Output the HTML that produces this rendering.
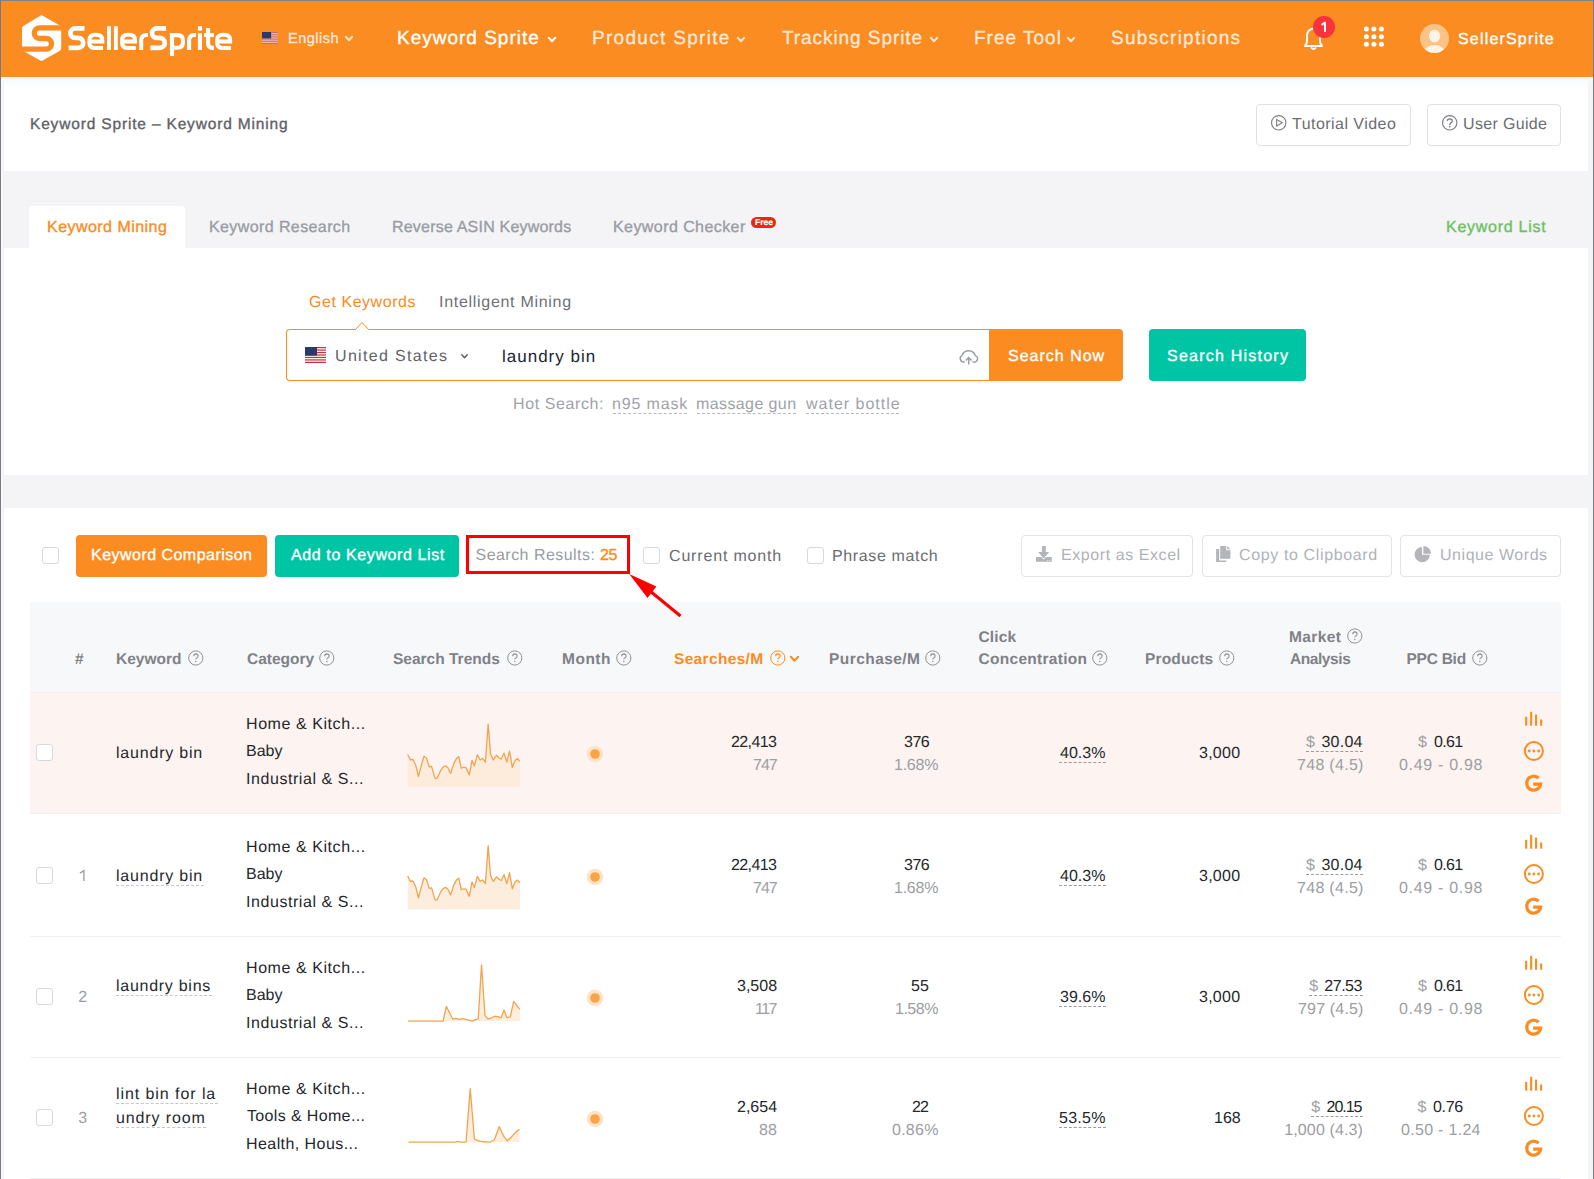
<!DOCTYPE html><html><head><meta charset="utf-8"><style>
html,body{margin:0;padding:0;width:1594px;height:1179px;overflow:hidden;position:relative;font-family:"Liberation Sans",sans-serif}
.t{position:absolute;white-space:pre;font-family:"Liberation Sans",sans-serif;text-rendering:geometricPrecision}
</style></head><body>
<div style="position:absolute;left:0px;top:0px;width:1594px;height:1179px;background:#f4f4f7;"></div>
<div style="position:absolute;left:4px;top:77px;width:1584px;height:1102px;background:#ffffff;"></div>
<div style="position:absolute;left:1px;top:77px;width:1px;height:1102px;background:#fcfcfe;"></div>
<div style="position:absolute;left:1px;top:1px;width:1592px;height:76px;background:#fa8c22;"></div>
<div style="position:absolute;left:0px;top:0px;width:1594px;height:1px;background:#78838e;"></div>
<div style="position:absolute;left:0px;top:0px;width:1px;height:1179px;background:#757b82;"></div>
<div style="position:absolute;left:1593px;top:0px;width:1px;height:1179px;background:#757b82;"></div>
<svg style="position:absolute;left:0;top:0" width="300" height="77" viewBox="0 0 300 77">
<path d="M41.4 15.1 L59.9 25.6 Q61.2 26.4 61.2 28 L61.2 48.2 Q61.2 50 59.6 51 L42.6 60.4 Q41.4 61 40.2 60.4 L23.4 51 Q22 50.2 22 48.6 L22 28.4 Q22 26.8 23.4 26 Z" fill="#fff"/>
<path d="M64 27.9 H39.6 A5.3 5.3 0 0 0 39.6 38.5 H46.2 A5.3 5.3 0 0 1 46.2 49.1 H19" fill="none" stroke="#fa8c22" stroke-width="5.3"/>
</svg>
<svg style="position:absolute;left:0;top:0" width="260" height="77"><path transform="translate(0 0)" d="M84.5 28.45 H75.1 A4.7 4.7 0 0 0 75.1 37.85 H78.2 A5.02 5.02 0 0 1 78.2 47.9 H68.7" fill="none" stroke="#fff" stroke-width="4.7"/><path transform="translate(0 0)" d="M103.1 47.95 H94.6 Q89.35 47.95 89.35 42.6 V40.3 Q89.35 34.75 95 34.75 H96.8 Q102.35 34.75 102.35 40.3 V41.45 H89.35" fill="none" stroke="#fff" stroke-width="4"/><path transform="translate(32.7 0)" d="M103.1 47.95 H94.6 Q89.35 47.95 89.35 42.6 V40.3 Q89.35 34.75 95 34.75 H96.8 Q102.35 34.75 102.35 40.3 V41.45 H89.35" fill="none" stroke="#fff" stroke-width="4"/><path transform="translate(127.8 0)" d="M103.1 47.95 H94.6 Q89.35 47.95 89.35 42.6 V40.3 Q89.35 34.75 95 34.75 H96.8 Q102.35 34.75 102.35 40.3 V41.45 H89.35" fill="none" stroke="#fff" stroke-width="4"/><path transform="translate(81.6 0)" d="M84.5 28.45 H75.1 A4.7 4.7 0 0 0 75.1 37.85 H78.2 A5.02 5.02 0 0 1 78.2 47.9 H68.7" fill="none" stroke="#fff" stroke-width="4.7"/><rect x="107" y="26.2" width="3.9" height="23.7" fill="#fff"/><rect x="113.9" y="26.2" width="3.9" height="23.7" fill="#fff"/><path transform="translate(0 0)" d="M141.2 49.9 V40.5 Q141.2 35 146.5 35 H148" fill="none" stroke="#fff" stroke-width="4.1"/><path transform="translate(47.9 0)" d="M141.2 49.9 V40.5 Q141.2 35 146.5 35 H148" fill="none" stroke="#fff" stroke-width="4.1"/><rect x="169.9" y="33" width="4.2" height="23" fill="#fff"/><path d="M172 35.1 H177.6 Q182.9 35.1 182.9 40.4 V42.6 Q182.9 47.8 177.6 47.8 H172" fill="none" stroke="#fff" stroke-width="4.1"/><rect x="197.9" y="33.2" width="4.1" height="16.7" fill="#fff"/><rect x="197.9" y="26.2" width="4.1" height="4.4" fill="#fff"/><path d="M208.1 28 V43.5 Q208.1 47.9 212.5 47.9 H213.9" fill="none" stroke="#fff" stroke-width="4.1"/><rect x="204.1" y="33.1" width="9.8" height="4" fill="#fff"/></svg>
<svg style="position:absolute;left:262px;top:32px" width="16" height="12" viewBox="0 0 16 12"><rect width="16" height="12" fill="#f0c9b0"/><rect x="0" y="0.00" width="16" height="0.92" fill="#d0606a"/><rect x="0" y="1.85" width="16" height="0.92" fill="#d0606a"/><rect x="0" y="3.69" width="16" height="0.92" fill="#d0606a"/><rect x="0" y="5.54" width="16" height="0.92" fill="#d0606a"/><rect x="0" y="7.38" width="16" height="0.92" fill="#d0606a"/><rect x="0" y="9.23" width="16" height="0.92" fill="#d0606a"/><rect x="0" y="11.08" width="16" height="0.92" fill="#d0606a"/><rect width="9.12" height="6.46" fill="#2b3a6b"/></svg>
<svg style="position:absolute;left:345px;top:35.5px;overflow:visible" width="8" height="5"><path d="M0.8 0.8 L4.0 4.2 L7.2 0.8" fill="none" stroke="rgba(255,255,255,0.75)" stroke-width="2" stroke-linecap="round" stroke-linejoin="round"/></svg>
<svg style="position:absolute;left:548px;top:37px;overflow:visible" width="8" height="5"><path d="M0.8 0.8 L4.0 4.2 L7.2 0.8" fill="none" stroke="#fff" stroke-width="2" stroke-linecap="round" stroke-linejoin="round"/></svg>
<svg style="position:absolute;left:737px;top:37px;overflow:visible" width="8" height="5"><path d="M0.8 0.8 L4.0 4.2 L7.2 0.8" fill="none" stroke="rgba(255,255,255,0.78)" stroke-width="2" stroke-linecap="round" stroke-linejoin="round"/></svg>
<svg style="position:absolute;left:930px;top:37px;overflow:visible" width="8" height="5"><path d="M0.8 0.8 L4.0 4.2 L7.2 0.8" fill="none" stroke="rgba(255,255,255,0.78)" stroke-width="2" stroke-linecap="round" stroke-linejoin="round"/></svg>
<svg style="position:absolute;left:1067px;top:37px;overflow:visible" width="8" height="5"><path d="M0.8 0.8 L4.0 4.2 L7.2 0.8" fill="none" stroke="rgba(255,255,255,0.78)" stroke-width="2" stroke-linecap="round" stroke-linejoin="round"/></svg>
<svg style="position:absolute;left:1300px;top:24px" width="28" height="28" viewBox="0 0 28 28">
<path d="M5 22 L5.5 21 Q7 19.5 7 17 L7 12 Q7 5.5 13.5 4.5 Q20 5.5 20 12 L20 17 Q20 19.5 21.5 21 L22 22 Z" fill="none" stroke="#fff" stroke-width="1.9" stroke-linejoin="round"/>
<path d="M11 23.5 Q13.5 26.5 16 23.5" fill="none" stroke="#fff" stroke-width="1.9"/>
</svg>
<div style="position:absolute;left:1313px;top:16px;width:22px;height:22px;border-radius:50%;background:#f7343c"></div>
<svg style="position:absolute;left:0;top:0;overflow:visible" width="1" height="1"><path d="M1321.6 24.9 L1325 22.5 V32.1" fill="none" stroke="#fff" stroke-width="1.9" stroke-linejoin="round"/></svg>
<svg style="position:absolute;left:1350px;top:20px" width="50" height="40"><circle cx="16.40000000000009" cy="9.100000000000001" r="2.5" fill="#fff"/><circle cx="23.90000000000009" cy="9.100000000000001" r="2.5" fill="#fff"/><circle cx="31.40000000000009" cy="9.100000000000001" r="2.5" fill="#fff"/><circle cx="16.40000000000009" cy="16.700000000000003" r="2.5" fill="#fff"/><circle cx="23.90000000000009" cy="16.700000000000003" r="2.5" fill="#fff"/><circle cx="31.40000000000009" cy="16.700000000000003" r="2.5" fill="#fff"/><circle cx="16.40000000000009" cy="24.200000000000003" r="2.5" fill="#fff"/><circle cx="23.90000000000009" cy="24.200000000000003" r="2.5" fill="#fff"/><circle cx="31.40000000000009" cy="24.200000000000003" r="2.5" fill="#fff"/></svg>
<svg style="position:absolute;left:1419px;top:23px" width="31" height="31" viewBox="0 0 31 31">
<defs><clipPath id="av"><circle cx="15.5" cy="15.5" r="14.5"/></clipPath></defs>
<circle cx="15.5" cy="15.5" r="14.5" fill="#fcc386"/>
<g clip-path="url(#av)"><ellipse cx="15.5" cy="13" rx="5.6" ry="6.3" fill="#fff3e6"/><ellipse cx="15.5" cy="32" rx="12" ry="10" fill="#fff3e6"/></g>
</svg>
<div style="position:absolute;left:1px;top:77px;width:1592px;height:11px;background:linear-gradient(#f5f8fa,rgba(255,255,255,0));"></div>
<div style="position:absolute;left:1256px;top:104px;width:153px;height:40px;border:1px solid #dfe1e6;border-radius:4px;background:#fff"></div>
<div style="position:absolute;left:1427px;top:104px;width:132px;height:40px;border:1px solid #dfe1e6;border-radius:4px;background:#fff"></div>
<svg style="position:absolute;left:0;top:0;overflow:visible" width="1" height="1">
<circle cx="1278.7" cy="122.8" r="7.2" fill="none" stroke="#7d7f85" stroke-width="1.1"/><path d="M1276.6 119.5 L1282.3 122.8 L1276.6 126.1 Z" fill="none" stroke="#7d7f85" stroke-width="1.1" stroke-linejoin="round"/>
<circle cx="1449.7" cy="122.8" r="7.2" fill="none" stroke="#7d7f85" stroke-width="1.1"/>
<path d="M1447.2 120.9 Q1447.3 118.8 1449.8 118.8 Q1452.3 118.9 1452.3 120.9 Q1452.3 122.2 1450.9 122.9 Q1449.8 123.5 1449.8 124.9" fill="none" stroke="#7d7f85" stroke-width="1.25"/><circle cx="1449.8" cy="126.6" r="0.85" fill="#7d7f85"/>
</svg>
<div style="position:absolute;left:2px;top:171px;width:1591px;height:77px;background:#f4f4f7;"></div>
<div style="position:absolute;left:29px;top:206px;width:156px;height:42px;background:#fff;border-radius:4px 4px 0 0"></div>
<div style="position:absolute;left:751px;top:217px;width:25px;height:11px;border-radius:6px;background:#e42a10"></div>
<div style="position:absolute;left:286px;top:329px;width:702px;height:50px;border:1px solid #fa8c22;border-right:none;border-radius:4px 0 0 4px;background:#fff"></div>
<svg style="position:absolute;left:350px;top:318px" width="26" height="13" viewBox="0 0 26 13"><path d="M5 12 L12 4.5 L19 12" fill="#fff" stroke="#fa8c22" stroke-width="1"/><rect x="5.5" y="11.6" width="13" height="1.4" fill="#fff"/></svg>
<svg style="position:absolute;left:305px;top:347px" width="21" height="16" viewBox="0 0 21 16"><rect width="21" height="16" fill="#fff"/><rect x="0" y="0.00" width="21" height="1.23" fill="#c8313e"/><rect x="0" y="2.46" width="21" height="1.23" fill="#c8313e"/><rect x="0" y="4.92" width="21" height="1.23" fill="#c8313e"/><rect x="0" y="7.38" width="21" height="1.23" fill="#c8313e"/><rect x="0" y="9.85" width="21" height="1.23" fill="#c8313e"/><rect x="0" y="12.31" width="21" height="1.23" fill="#c8313e"/><rect x="0" y="14.77" width="21" height="1.23" fill="#c8313e"/><rect width="11.97" height="8.62" fill="#2b3a6b"/></svg>
<svg style="position:absolute;left:461px;top:354px;overflow:visible" width="7" height="4.5"><path d="M0.8 0.8 L3.5 3.7 L6.2 0.8" fill="none" stroke="#606266" stroke-width="1.6" stroke-linecap="round" stroke-linejoin="round"/></svg>
<svg style="position:absolute;left:0;top:0;overflow:visible" width="1" height="1"><path d="M964.3 361.9 A3.5 3.5 0 0 1 962.2 355.3 A6.9 6.9 0 0 1 975.3 355.6 A3.3 3.3 0 0 1 972.9 361.9" fill="none" stroke="#9a9da3" stroke-width="1.5" stroke-linecap="round"/><path d="M968.7 364.6 V358 M965.8 360.5 L968.7 357.5 L971.6 360.5" fill="none" stroke="#9a9da3" stroke-width="1.5"/></svg>
<div style="position:absolute;left:989px;top:329px;width:134px;height:52px;background:#fa8c22;border-radius:0 4px 4px 0"></div>
<div style="position:absolute;left:1149px;top:329px;width:157px;height:52px;background:#00c5a5;border-radius:4px"></div>
<div style="position:absolute;left:613px;top:412.5px;width:74px;height:0;border-top:1px dashed #b5b7bc"></div>
<div style="position:absolute;left:697px;top:412.5px;width:99px;height:0;border-top:1px dashed #b5b7bc"></div>
<div style="position:absolute;left:806px;top:412.5px;width:93px;height:0;border-top:1px dashed #b5b7bc"></div>
<div style="position:absolute;left:2px;top:475px;width:1591px;height:33px;background:#f4f4f7;"></div>
<div style="position:absolute;left:42px;top:547px;width:15px;height:15px;border:1px solid #d6d9e0;border-radius:3px;background:#fff"></div>
<div style="position:absolute;left:76px;top:535px;width:191px;height:42px;background:#fa8c22;border-radius:4px"></div>
<div style="position:absolute;left:275px;top:535px;width:184px;height:42px;background:#00c5a5;border-radius:4px"></div>
<div style="position:absolute;left:466px;top:535px;width:158px;height:33px;border:3px solid #ff0000"></div>
<svg style="position:absolute;left:620px;top:565px;z-index:5" width="70" height="60" viewBox="620 565 70 60"><path d="M680.5 616 L650 591" stroke="#ff0000" stroke-width="3.1" stroke-linecap="butt"/><path d="M629.2 573.9 L656.4 586.6 L647.5 598.1 Z" fill="#ff0000"/></svg>
<div style="position:absolute;left:643px;top:547px;width:15px;height:15px;border:1px solid #d6d9e0;border-radius:3px;background:#fff"></div>
<div style="position:absolute;left:807px;top:547px;width:15px;height:15px;border:1px solid #d6d9e0;border-radius:3px;background:#fff"></div>
<div style="position:absolute;left:1021px;top:535px;width:170px;height:40px;border:1px solid #e3e4e8;border-radius:4px;background:#fff"></div>
<div style="position:absolute;left:1202px;top:535px;width:188px;height:40px;border:1px solid #e3e4e8;border-radius:4px;background:#fff"></div>
<div style="position:absolute;left:1400px;top:535px;width:159px;height:40px;border:1px solid #e3e4e8;border-radius:4px;background:#fff"></div>
<svg style="position:absolute;left:0;top:0;overflow:visible" width="1" height="1"><g fill="#b3b5ba">
<rect x="1042" y="546" width="3.8" height="6.5"/><path d="M1038.1 552 L1049.2 552 L1043.6 558.4 Z"/>
<path d="M1036 557.1 H1041.3 L1043.6 559.6 L1045.9 557.1 H1051.8 V561.8 H1036 Z"/>
</g><circle cx="1047.6" cy="560.5" r="0.6" fill="#e8e8ea"/><circle cx="1049.6" cy="560.5" r="0.6" fill="#e8e8ea"/></svg>
<svg style="position:absolute;left:0;top:0;overflow:visible" width="1" height="1"><g fill="#b3b5ba">
<path d="M1216.1 549 H1219.2 V560.4 H1226.3 V561.9 H1216.1 Z"/>
<path d="M1220.2 546.1 H1226.2 V550.3 H1230.4 V558.8 H1220.2 Z"/><path d="M1227.2 546.1 L1230.4 549.2 H1227.2 Z"/>
</g></svg>
<svg style="position:absolute;left:0;top:0;overflow:visible" width="1" height="1"><g fill="#b3b5ba">
<path d="M1422 547 A7.6 7.6 0 1 0 1429.8 554.7 H1422 Z"/><path d="M1423.3 546 A7.7 7.7 0 0 1 1431 553.7 H1423.3 Z"/>
</g></svg>
<div style="position:absolute;left:30px;top:602px;width:1531px;height:90px;background:#f7f8fa;"></div>
<div style="position:absolute;left:30px;top:692px;width:1531px;height:1px;background:#eceef2;"></div>
<svg style="position:absolute;left:187.5px;top:650px" width="16" height="16" viewBox="0 0 16 16"><circle cx="7.8" cy="8" r="7.1" fill="none" stroke="#909196" stroke-width="1"/><path d="M5.7 6.2 Q5.8 3.9 7.9 3.9 Q10.1 4 10.1 6 Q10.1 7.2 8.8 7.9 Q7.8 8.5 7.8 9.6" fill="none" stroke="#909196" stroke-width="1.1"/><circle cx="7.8" cy="11.6" r="0.75" fill="#909196"/></svg>
<svg style="position:absolute;left:319.3px;top:650px" width="16" height="16" viewBox="0 0 16 16"><circle cx="7.8" cy="8" r="7.1" fill="none" stroke="#909196" stroke-width="1"/><path d="M5.7 6.2 Q5.8 3.9 7.9 3.9 Q10.1 4 10.1 6 Q10.1 7.2 8.8 7.9 Q7.8 8.5 7.8 9.6" fill="none" stroke="#909196" stroke-width="1.1"/><circle cx="7.8" cy="11.6" r="0.75" fill="#909196"/></svg>
<svg style="position:absolute;left:507px;top:650px" width="16" height="16" viewBox="0 0 16 16"><circle cx="7.8" cy="8" r="7.1" fill="none" stroke="#909196" stroke-width="1"/><path d="M5.7 6.2 Q5.8 3.9 7.9 3.9 Q10.1 4 10.1 6 Q10.1 7.2 8.8 7.9 Q7.8 8.5 7.8 9.6" fill="none" stroke="#909196" stroke-width="1.1"/><circle cx="7.8" cy="11.6" r="0.75" fill="#909196"/></svg>
<svg style="position:absolute;left:616px;top:650px" width="16" height="16" viewBox="0 0 16 16"><circle cx="7.8" cy="8" r="7.1" fill="none" stroke="#909196" stroke-width="1"/><path d="M5.7 6.2 Q5.8 3.9 7.9 3.9 Q10.1 4 10.1 6 Q10.1 7.2 8.8 7.9 Q7.8 8.5 7.8 9.6" fill="none" stroke="#909196" stroke-width="1.1"/><circle cx="7.8" cy="11.6" r="0.75" fill="#909196"/></svg>
<svg style="position:absolute;left:769.5px;top:650px" width="16" height="16" viewBox="0 0 16 16"><circle cx="7.8" cy="8" r="7.1" fill="none" stroke="#fa8c22" stroke-width="1"/><path d="M5.7 6.2 Q5.8 3.9 7.9 3.9 Q10.1 4 10.1 6 Q10.1 7.2 8.8 7.9 Q7.8 8.5 7.8 9.6" fill="none" stroke="#fa8c22" stroke-width="1.1"/><circle cx="7.8" cy="11.6" r="0.75" fill="#fa8c22"/></svg>
<svg style="position:absolute;left:790px;top:655.8px;overflow:visible" width="9" height="5.5"><path d="M0.8 0.8 L4.5 4.7 L8.2 0.8" fill="none" stroke="#fa8c22" stroke-width="2" stroke-linecap="round" stroke-linejoin="round"/></svg>
<svg style="position:absolute;left:925.3px;top:650px" width="16" height="16" viewBox="0 0 16 16"><circle cx="7.8" cy="8" r="7.1" fill="none" stroke="#909196" stroke-width="1"/><path d="M5.7 6.2 Q5.8 3.9 7.9 3.9 Q10.1 4 10.1 6 Q10.1 7.2 8.8 7.9 Q7.8 8.5 7.8 9.6" fill="none" stroke="#909196" stroke-width="1.1"/><circle cx="7.8" cy="11.6" r="0.75" fill="#909196"/></svg>
<svg style="position:absolute;left:1092.3px;top:650px" width="16" height="16" viewBox="0 0 16 16"><circle cx="7.8" cy="8" r="7.1" fill="none" stroke="#909196" stroke-width="1"/><path d="M5.7 6.2 Q5.8 3.9 7.9 3.9 Q10.1 4 10.1 6 Q10.1 7.2 8.8 7.9 Q7.8 8.5 7.8 9.6" fill="none" stroke="#909196" stroke-width="1.1"/><circle cx="7.8" cy="11.6" r="0.75" fill="#909196"/></svg>
<svg style="position:absolute;left:1219px;top:650px" width="16" height="16" viewBox="0 0 16 16"><circle cx="7.8" cy="8" r="7.1" fill="none" stroke="#909196" stroke-width="1"/><path d="M5.7 6.2 Q5.8 3.9 7.9 3.9 Q10.1 4 10.1 6 Q10.1 7.2 8.8 7.9 Q7.8 8.5 7.8 9.6" fill="none" stroke="#909196" stroke-width="1.1"/><circle cx="7.8" cy="11.6" r="0.75" fill="#909196"/></svg>
<svg style="position:absolute;left:1347px;top:627.5px" width="16" height="16" viewBox="0 0 16 16"><circle cx="7.8" cy="8" r="7.1" fill="none" stroke="#909196" stroke-width="1"/><path d="M5.7 6.2 Q5.8 3.9 7.9 3.9 Q10.1 4 10.1 6 Q10.1 7.2 8.8 7.9 Q7.8 8.5 7.8 9.6" fill="none" stroke="#909196" stroke-width="1.1"/><circle cx="7.8" cy="11.6" r="0.75" fill="#909196"/></svg>
<svg style="position:absolute;left:1471.7px;top:650px" width="16" height="16" viewBox="0 0 16 16"><circle cx="7.8" cy="8" r="7.1" fill="none" stroke="#909196" stroke-width="1"/><path d="M5.7 6.2 Q5.8 3.9 7.9 3.9 Q10.1 4 10.1 6 Q10.1 7.2 8.8 7.9 Q7.8 8.5 7.8 9.6" fill="none" stroke="#909196" stroke-width="1.1"/><circle cx="7.8" cy="11.6" r="0.75" fill="#909196"/></svg>
<div style="position:absolute;left:30px;top:693px;width:1531px;height:120px;background:#fdf3f0;"></div>
<div style="position:absolute;left:30px;top:813px;width:1531px;height:1px;background:#eef0f4;"></div>
<div style="position:absolute;left:30px;top:936px;width:1531px;height:1px;background:#eef0f4;"></div>
<div style="position:absolute;left:30px;top:1057px;width:1531px;height:1px;background:#eef0f4;"></div>
<div style="position:absolute;left:30px;top:1178px;width:1531px;height:1px;background:#eef0f4;"></div>
<svg style="position:absolute;left:0;top:0;overflow:visible" width="1" height="1"><path d="M407.70 754.44 L410.46 759.97 L411.84 759.41 L413.22 759.97 L415.70 765.21 L418.46 776.25 L421.22 765.90 L423.99 756.24 L426.47 758.03 L429.23 766.87 L431.58 766.31 L435.03 778.32 L437.10 778.32 L440.55 770.73 L443.31 766.87 L445.79 765.90 L448.14 767.97 L450.62 773.49 L453.66 763.83 L456.42 758.59 L458.77 756.65 L461.25 768.25 L463.32 767.28 L466.08 767.69 L469.26 774.87 L472.02 760.38 L474.37 765.90 L477.40 754.86 L480.16 759.97 L482.65 758.31 L485.41 762.17 L488.17 724.08 L490.51 753.89 L493.27 759.97 L496.45 755.27 L499.21 758.03 L501.28 759.00 L504.04 753.06 L506.80 762.17 L509.56 751.13 L512.32 767.28 L515.08 760.38 L517.57 758.59 L519.91 761.35 L519.91 786.60 L407.70 786.60 Z" fill="#fdebd8" opacity="0.9"/><path d="M407.70 754.44 L410.46 759.97 L411.84 759.41 L413.22 759.97 L415.70 765.21 L418.46 776.25 L421.22 765.90 L423.99 756.24 L426.47 758.03 L429.23 766.87 L431.58 766.31 L435.03 778.32 L437.10 778.32 L440.55 770.73 L443.31 766.87 L445.79 765.90 L448.14 767.97 L450.62 773.49 L453.66 763.83 L456.42 758.59 L458.77 756.65 L461.25 768.25 L463.32 767.28 L466.08 767.69 L469.26 774.87 L472.02 760.38 L474.37 765.90 L477.40 754.86 L480.16 759.97 L482.65 758.31 L485.41 762.17 L488.17 724.08 L490.51 753.89 L493.27 759.97 L496.45 755.27 L499.21 758.03 L501.28 759.00 L504.04 753.06 L506.80 762.17 L509.56 751.13 L512.32 767.28 L515.08 760.38 L517.57 758.59 L519.91 761.35" fill="none" stroke="#f2a34e" stroke-width="1.3" stroke-linejoin="round"/></svg>
<svg style="position:absolute;left:0;top:0;overflow:visible" width="1" height="1"><path d="M407.70 875.94 L410.46 881.47 L411.84 880.91 L413.22 881.47 L415.70 886.71 L418.46 897.75 L421.22 887.40 L423.99 877.74 L426.47 879.53 L429.23 888.37 L431.58 887.81 L435.03 899.82 L437.10 899.82 L440.55 892.23 L443.31 888.37 L445.79 887.40 L448.14 889.47 L450.62 894.99 L453.66 885.33 L456.42 880.09 L458.77 878.15 L461.25 889.75 L463.32 888.78 L466.08 889.19 L469.26 896.37 L472.02 881.88 L474.37 887.40 L477.40 876.36 L480.16 881.47 L482.65 879.81 L485.41 883.67 L488.17 845.58 L490.51 875.39 L493.27 881.47 L496.45 876.77 L499.21 879.53 L501.28 880.50 L504.04 874.56 L506.80 883.67 L509.56 872.63 L512.32 888.78 L515.08 881.88 L517.57 880.09 L519.91 882.85 L519.91 909.35 L407.70 909.35 Z" fill="#fdebd8" opacity="0.9"/><path d="M407.70 875.94 L410.46 881.47 L411.84 880.91 L413.22 881.47 L415.70 886.71 L418.46 897.75 L421.22 887.40 L423.99 877.74 L426.47 879.53 L429.23 888.37 L431.58 887.81 L435.03 899.82 L437.10 899.82 L440.55 892.23 L443.31 888.37 L445.79 887.40 L448.14 889.47 L450.62 894.99 L453.66 885.33 L456.42 880.09 L458.77 878.15 L461.25 889.75 L463.32 888.78 L466.08 889.19 L469.26 896.37 L472.02 881.88 L474.37 887.40 L477.40 876.36 L480.16 881.47 L482.65 879.81 L485.41 883.67 L488.17 845.58 L490.51 875.39 L493.27 881.47 L496.45 876.77 L499.21 879.53 L501.28 880.50 L504.04 874.56 L506.80 883.67 L509.56 872.63 L512.32 888.78 L515.08 881.88 L517.57 880.09 L519.91 882.85" fill="none" stroke="#f2a34e" stroke-width="1.3" stroke-linejoin="round"/></svg>
<svg style="position:absolute;left:0;top:0;overflow:visible" width="1" height="1"><path d="M408.11 1021.08 L443.03 1021.08 L446.35 1006.31 L452.69 1019.01 L455.73 1018.32 L459.18 1019.43 L462.63 1018.60 L466.08 1019.43 L472.02 1021.08 L478.23 1018.60 L481.54 964.91 L484.99 1015.56 L488.17 1019.01 L491.62 1017.91 L494.65 1016.25 L497.83 1016.53 L501.00 1017.91 L504.04 1010.04 L506.80 1017.63 L510.25 1016.94 L513.70 1001.35 L519.91 1009.35 L519.91 1021.08 L408.11 1021.08 Z" fill="#fdebd8" opacity="0.9"/><path d="M408.11 1021.08 L443.03 1021.08 L446.35 1006.31 L452.69 1019.01 L455.73 1018.32 L459.18 1019.43 L462.63 1018.60 L466.08 1019.43 L472.02 1021.08 L478.23 1018.60 L481.54 964.91 L484.99 1015.56 L488.17 1019.01 L491.62 1017.91 L494.65 1016.25 L497.83 1016.53 L501.00 1017.91 L504.04 1010.04 L506.80 1017.63 L510.25 1016.94 L513.70 1001.35 L519.91 1009.35" fill="none" stroke="#f2a34e" stroke-width="1.3" stroke-linejoin="round"/></svg>
<svg style="position:absolute;left:0;top:0;overflow:visible" width="1" height="1"><path d="M408.53 1142.05 L455.04 1142.05 L457.80 1141.36 L460.98 1142.05 L466.08 1142.05 L470.22 1088.63 L474.37 1139.01 L477.82 1140.67 L483.34 1141.77 L490.24 1142.05 L494.38 1139.70 L499.21 1126.59 L503.35 1135.56 L507.08 1140.67 L510.94 1137.63 L515.77 1132.11 L519.50 1129.35 L519.50 1142.05 L408.53 1142.05 Z" fill="#fdebd8" opacity="0.9"/><path d="M408.53 1142.05 L455.04 1142.05 L457.80 1141.36 L460.98 1142.05 L466.08 1142.05 L470.22 1088.63 L474.37 1139.01 L477.82 1140.67 L483.34 1141.77 L490.24 1142.05 L494.38 1139.70 L499.21 1126.59 L503.35 1135.56 L507.08 1140.67 L510.94 1137.63 L515.77 1132.11 L519.50 1129.35" fill="none" stroke="#f2a34e" stroke-width="1.3" stroke-linejoin="round"/></svg>
<div style="position:absolute;left:36px;top:744px;width:15px;height:15px;border:1px solid #d6d9e0;border-radius:3px;background:#fff"></div>
<svg style="position:absolute;left:586px;top:745.2px" width="18" height="18"><circle cx="9" cy="9" r="8.3" fill="#fde3c7"/><circle cx="9" cy="9" r="4.8" fill="#fba445"/></svg>
<div style="position:absolute;left:1059px;top:762px;width:47px;height:0;border-top:1px dashed #9a9ca1"></div>
<div style="position:absolute;left:1306px;top:751px;width:57px;height:0;border-top:1px dashed #9a9ca1"></div>

<svg style="position:absolute;left:1520px;top:709.2px" width="30" height="84" viewBox="0 0 30 84"><rect x="5.1" y="7.8" width="2.1" height="8.9" fill="#fa8c22"/><rect x="10.1" y="2.8" width="2.1" height="13.9" fill="#fa8c22"/><rect x="15.0" y="5.6" width="2.1" height="11.1" fill="#fa8c22"/><rect x="20.1" y="10.5" width="2.1" height="6.2" fill="#fa8c22"/>
<circle cx="13.9" cy="42" r="9" fill="none" stroke="#fa8c22" stroke-width="2"/>
<circle cx="9.3" cy="42" r="1.4" fill="#fa8c22"/><circle cx="13.9" cy="42" r="1.4" fill="#fa8c22"/><circle cx="18.6" cy="42" r="1.4" fill="#fa8c22"/>
</svg>
<svg style="position:absolute;left:1522.3px;top:774.0px" width="22" height="20" viewBox="0 0 22 20"><path d="M16.6 4.2 A7 7 0 1 0 18.6 10.2 H11.2" fill="none" stroke="#fa8c22" stroke-width="3.2"/></svg>
<div style="position:absolute;left:36px;top:867px;width:15px;height:15px;border:1px solid #d6d9e0;border-radius:3px;background:#fff"></div>
<svg style="position:absolute;left:0;top:0;overflow:visible" width="1" height="1"><path d="M79.9 873.1 L83.9 870.7 V881" fill="none" stroke="#9c9ea3" stroke-width="1.35"/></svg>
<div style="position:absolute;left:116px;top:885.1px;width:88px;height:0;border-top:1px dashed #c4c6cb"></div>
<svg style="position:absolute;left:586px;top:868.2px" width="18" height="18"><circle cx="9" cy="9" r="8.3" fill="#fde3c7"/><circle cx="9" cy="9" r="4.8" fill="#fba445"/></svg>
<div style="position:absolute;left:1059px;top:885px;width:47px;height:0;border-top:1px dashed #9a9ca1"></div>
<div style="position:absolute;left:1306px;top:874px;width:57px;height:0;border-top:1px dashed #9a9ca1"></div>

<svg style="position:absolute;left:1520px;top:832.2px" width="30" height="84" viewBox="0 0 30 84"><rect x="5.1" y="7.8" width="2.1" height="8.9" fill="#fa8c22"/><rect x="10.1" y="2.8" width="2.1" height="13.9" fill="#fa8c22"/><rect x="15.0" y="5.6" width="2.1" height="11.1" fill="#fa8c22"/><rect x="20.1" y="10.5" width="2.1" height="6.2" fill="#fa8c22"/>
<circle cx="13.9" cy="42" r="9" fill="none" stroke="#fa8c22" stroke-width="2"/>
<circle cx="9.3" cy="42" r="1.4" fill="#fa8c22"/><circle cx="13.9" cy="42" r="1.4" fill="#fa8c22"/><circle cx="18.6" cy="42" r="1.4" fill="#fa8c22"/>
</svg>
<svg style="position:absolute;left:1522.3px;top:897.0px" width="22" height="20" viewBox="0 0 22 20"><path d="M16.6 4.2 A7 7 0 1 0 18.6 10.2 H11.2" fill="none" stroke="#fa8c22" stroke-width="3.2"/></svg>
<div style="position:absolute;left:36px;top:988px;width:15px;height:15px;border:1px solid #d6d9e0;border-radius:3px;background:#fff"></div>
<div style="position:absolute;left:116px;top:994.5px;width:96px;height:0;border-top:1px dashed #c4c6cb"></div>
<svg style="position:absolute;left:586px;top:989.2px" width="18" height="18"><circle cx="9" cy="9" r="8.3" fill="#fde3c7"/><circle cx="9" cy="9" r="4.8" fill="#fba445"/></svg>
<div style="position:absolute;left:1059px;top:1006px;width:47px;height:0;border-top:1px dashed #9a9ca1"></div>
<div style="position:absolute;left:1309.3px;top:995px;width:53.700000000000045px;height:0;border-top:1px dashed #9a9ca1"></div>

<svg style="position:absolute;left:1520px;top:953.2px" width="30" height="84" viewBox="0 0 30 84"><rect x="5.1" y="7.8" width="2.1" height="8.9" fill="#fa8c22"/><rect x="10.1" y="2.8" width="2.1" height="13.9" fill="#fa8c22"/><rect x="15.0" y="5.6" width="2.1" height="11.1" fill="#fa8c22"/><rect x="20.1" y="10.5" width="2.1" height="6.2" fill="#fa8c22"/>
<circle cx="13.9" cy="42" r="9" fill="none" stroke="#fa8c22" stroke-width="2"/>
<circle cx="9.3" cy="42" r="1.4" fill="#fa8c22"/><circle cx="13.9" cy="42" r="1.4" fill="#fa8c22"/><circle cx="18.6" cy="42" r="1.4" fill="#fa8c22"/>
</svg>
<svg style="position:absolute;left:1522.3px;top:1018.0px" width="22" height="20" viewBox="0 0 22 20"><path d="M16.6 4.2 A7 7 0 1 0 18.6 10.2 H11.2" fill="none" stroke="#fa8c22" stroke-width="3.2"/></svg>
<div style="position:absolute;left:36px;top:1109px;width:15px;height:15px;border:1px solid #d6d9e0;border-radius:3px;background:#fff"></div>
<div style="position:absolute;left:116px;top:1103.4px;width:102px;height:0;border-top:1px dashed #c4c6cb"></div>
<div style="position:absolute;left:116px;top:1126.6px;width:90px;height:0;border-top:1px dashed #c4c6cb"></div>
<svg style="position:absolute;left:586px;top:1110.2px" width="18" height="18"><circle cx="9" cy="9" r="8.3" fill="#fde3c7"/><circle cx="9" cy="9" r="4.8" fill="#fba445"/></svg>
<div style="position:absolute;left:1059px;top:1127px;width:47px;height:0;border-top:1px dashed #9a9ca1"></div>
<div style="position:absolute;left:1311.3px;top:1116px;width:51.700000000000045px;height:0;border-top:1px dashed #9a9ca1"></div>

<svg style="position:absolute;left:1520px;top:1074.2px" width="30" height="84" viewBox="0 0 30 84"><rect x="5.1" y="7.8" width="2.1" height="8.9" fill="#fa8c22"/><rect x="10.1" y="2.8" width="2.1" height="13.9" fill="#fa8c22"/><rect x="15.0" y="5.6" width="2.1" height="11.1" fill="#fa8c22"/><rect x="20.1" y="10.5" width="2.1" height="6.2" fill="#fa8c22"/>
<circle cx="13.9" cy="42" r="9" fill="none" stroke="#fa8c22" stroke-width="2"/>
<circle cx="9.3" cy="42" r="1.4" fill="#fa8c22"/><circle cx="13.9" cy="42" r="1.4" fill="#fa8c22"/><circle cx="18.6" cy="42" r="1.4" fill="#fa8c22"/>
</svg>
<svg style="position:absolute;left:1522.3px;top:1139.0px" width="22" height="20" viewBox="0 0 22 20"><path d="M16.6 4.2 A7 7 0 1 0 18.6 10.2 H11.2" fill="none" stroke="#fa8c22" stroke-width="3.2"/></svg>
<span class="t" style="left:288.00px;top:32.00px;font-size:14.5px;line-height:14.5px;font-weight:normal;letter-spacing:0.500px;color:rgba(255,255,255,0.75);-webkit-text-stroke:0.35px rgba(255,255,255,0.75);">English</span>
<span class="t" style="left:397.00px;top:29.00px;font-size:19px;line-height:19px;font-weight:normal;letter-spacing:1.000px;color:#fff;-webkit-text-stroke:0.35px #fff;">Keyword Sprite</span>
<span class="t" style="left:592.00px;top:29.00px;font-size:19px;line-height:19px;font-weight:normal;letter-spacing:1.308px;color:rgba(255,255,255,0.78);-webkit-text-stroke:0.35px rgba(255,255,255,0.78);">Product Sprite</span>
<span class="t" style="left:782.00px;top:29.00px;font-size:19px;line-height:19px;font-weight:normal;letter-spacing:0.929px;color:rgba(255,255,255,0.78);-webkit-text-stroke:0.35px rgba(255,255,255,0.78);">Tracking Sprite</span>
<span class="t" style="left:974.00px;top:29.00px;font-size:19px;line-height:19px;font-weight:normal;letter-spacing:1.000px;color:rgba(255,255,255,0.78);-webkit-text-stroke:0.35px rgba(255,255,255,0.78);">Free Tool</span>
<span class="t" style="left:1111.00px;top:29.00px;font-size:19px;line-height:19px;font-weight:normal;letter-spacing:1.250px;color:rgba(255,255,255,0.78);-webkit-text-stroke:0.35px rgba(255,255,255,0.78);">Subscriptions</span>
<span class="t" style="left:1458.00px;top:32.00px;font-size:16px;line-height:16px;font-weight:normal;letter-spacing:1.182px;color:#fff;-webkit-text-stroke:0.35px #fff;">SellerSprite</span>
<span class="t" style="left:30.00px;top:117.00px;font-size:15.5px;line-height:15.5px;font-weight:normal;letter-spacing:0.833px;color:#5f6166;-webkit-text-stroke:0.35px #5f6166;">Keyword Sprite – Keyword Mining</span>
<span class="t" style="left:1292.00px;top:117.00px;font-size:16px;line-height:16px;font-weight:normal;letter-spacing:0.462px;color:#6b6d72;">Tutorial Video</span>
<span class="t" style="left:1463.00px;top:117.00px;font-size:16px;line-height:16px;font-weight:normal;letter-spacing:0.333px;color:#6b6d72;">User Guide</span>
<span class="t" style="left:47.00px;top:220.00px;font-size:16px;line-height:16px;font-weight:normal;letter-spacing:0.462px;color:#fa8c22;-webkit-text-stroke:0.35px #fa8c22;">Keyword Mining</span>
<span class="t" style="left:209.00px;top:220.00px;font-size:16px;line-height:16px;font-weight:normal;letter-spacing:0.400px;color:#9a9ca3;-webkit-text-stroke:0.35px #9a9ca3;">Keyword Research</span>
<span class="t" style="left:392.00px;top:220.00px;font-size:16px;line-height:16px;font-weight:normal;letter-spacing:0.200px;color:#9a9ca3;-webkit-text-stroke:0.35px #9a9ca3;">Reverse ASIN Keywords</span>
<span class="t" style="left:613.00px;top:220.00px;font-size:16px;line-height:16px;font-weight:normal;letter-spacing:0.429px;color:#9a9ca3;-webkit-text-stroke:0.35px #9a9ca3;">Keyword Checker</span>
<span class="t" style="left:755.00px;top:218.00px;font-size:8.5px;line-height:8.5px;font-weight:bold;letter-spacing:0.000px;color:#fff;-webkit-text-stroke:0.2px #fff;">Free</span>
<span class="t" style="left:1446.00px;top:220.00px;font-size:16px;line-height:16px;font-weight:normal;letter-spacing:0.727px;color:#6cc15e;-webkit-text-stroke:0.35px #6cc15e;">Keyword List</span>
<span class="t" style="left:309.00px;top:295.00px;font-size:16px;line-height:16px;font-weight:normal;letter-spacing:0.545px;color:#fa8c22;">Get Keywords</span>
<span class="t" style="left:439.00px;top:295.00px;font-size:16px;line-height:16px;font-weight:normal;letter-spacing:0.706px;color:#6f7176;">Intelligent Mining</span>
<span class="t" style="left:335.00px;top:349.00px;font-size:16px;line-height:16px;font-weight:normal;letter-spacing:1.333px;color:#606266;">United States</span>
<span class="t" style="left:502.00px;top:348.00px;font-size:17px;line-height:17px;font-weight:normal;letter-spacing:1.000px;color:#1d2433;">laundry bin</span>
<span class="t" style="left:1008.00px;top:349.00px;font-size:16px;line-height:16px;font-weight:normal;letter-spacing:1.000px;color:#fff;-webkit-text-stroke:0.35px #fff;">Search Now</span>
<span class="t" style="left:1167.00px;top:349.00px;font-size:16px;line-height:16px;font-weight:normal;letter-spacing:1.231px;color:#fff;-webkit-text-stroke:0.35px #fff;">Search History</span>
<span class="t" style="left:513.00px;top:397.00px;font-size:16px;line-height:16px;font-weight:normal;letter-spacing:0.600px;color:#a0a2a7;">Hot Search:</span>
<span class="t" style="left:612.00px;top:397.00px;font-size:16px;line-height:16px;font-weight:normal;letter-spacing:0.857px;color:#a0a2a7;">n95 mask</span>
<span class="t" style="left:696.00px;top:397.00px;font-size:16px;line-height:16px;font-weight:normal;letter-spacing:0.400px;color:#a0a2a7;">massage gun</span>
<span class="t" style="left:806.00px;top:397.00px;font-size:16px;line-height:16px;font-weight:normal;letter-spacing:1.000px;color:#a0a2a7;">water bottle</span>
<span class="t" style="left:91.00px;top:548.00px;font-size:16px;line-height:16px;font-weight:normal;letter-spacing:0.471px;color:#fff;-webkit-text-stroke:0.35px #fff;">Keyword Comparison</span>
<span class="t" style="left:291.00px;top:548.00px;font-size:16px;line-height:16px;font-weight:normal;letter-spacing:0.611px;color:#fff;-webkit-text-stroke:0.35px #fff;">Add to Keyword List</span>
<span class="t" style="left:475.50px;top:548.00px;font-size:16px;line-height:16px;font-weight:normal;letter-spacing:0.464px;color:#9a9ca1;">Search Results:</span>
<span class="t" style="left:600.00px;top:548.00px;font-size:16px;line-height:16px;font-weight:normal;letter-spacing:-0.500px;color:#fa8c22;-webkit-text-stroke:0.35px #fa8c22;">25</span>
<span class="t" style="left:669.00px;top:549.00px;font-size:16px;line-height:16px;font-weight:normal;letter-spacing:0.833px;color:#6b6d72;">Current month</span>
<span class="t" style="left:832.00px;top:549.00px;font-size:16px;line-height:16px;font-weight:normal;letter-spacing:0.636px;color:#6b6d72;">Phrase match</span>
<span class="t" style="left:1061.00px;top:548.00px;font-size:16px;line-height:16px;font-weight:normal;letter-spacing:0.571px;color:#b0b2b7;">Export as Excel</span>
<span class="t" style="left:1239.00px;top:548.00px;font-size:16px;line-height:16px;font-weight:normal;letter-spacing:0.625px;color:#b0b2b7;">Copy to Clipboard</span>
<span class="t" style="left:1440.00px;top:548.00px;font-size:16px;line-height:16px;font-weight:normal;letter-spacing:0.545px;color:#b0b2b7;">Unique Words</span>
<span class="t" style="left:75.00px;top:652.00px;font-size:15.5px;line-height:15.5px;font-weight:bold;letter-spacing:0.000px;color:#808186;">#</span>
<span class="t" style="left:116.00px;top:652.00px;font-size:15.5px;line-height:15.5px;font-weight:bold;letter-spacing:0.000px;color:#808186;">Keyword</span>
<span class="t" style="left:247.00px;top:652.00px;font-size:15.5px;line-height:15.5px;font-weight:bold;letter-spacing:0.000px;color:#808186;">Category</span>
<span class="t" style="left:393.00px;top:652.00px;font-size:15.5px;line-height:15.5px;font-weight:bold;letter-spacing:0.000px;color:#808186;">Search Trends</span>
<span class="t" style="left:562.00px;top:652.00px;font-size:15.5px;line-height:15.5px;font-weight:bold;letter-spacing:0.500px;color:#808186;">Month</span>
<span class="t" style="left:674.00px;top:652.00px;font-size:15.5px;line-height:15.5px;font-weight:bold;letter-spacing:0.333px;color:#fa8c22;">Searches/M</span>
<span class="t" style="left:829.00px;top:652.00px;font-size:15.5px;line-height:15.5px;font-weight:bold;letter-spacing:0.444px;color:#808186;">Purchase/M</span>
<span class="t" style="left:978.50px;top:629.70px;font-size:15.5px;line-height:15.5px;font-weight:bold;letter-spacing:0.125px;color:#808186;">Click</span>
<span class="t" style="left:978.50px;top:652.00px;font-size:15.5px;line-height:15.5px;font-weight:bold;letter-spacing:0.292px;color:#808186;">Concentration</span>
<span class="t" style="left:1145.00px;top:652.00px;font-size:15.5px;line-height:15.5px;font-weight:bold;letter-spacing:0.143px;color:#808186;">Products</span>
<span class="t" style="left:1289.00px;top:629.70px;font-size:15.5px;line-height:15.5px;font-weight:bold;letter-spacing:0.400px;color:#808186;">Market</span>
<span class="t" style="left:1290.00px;top:652.00px;font-size:15.5px;line-height:15.5px;font-weight:bold;letter-spacing:-0.429px;color:#808186;">Analysis</span>
<span class="t" style="left:1406.50px;top:652.00px;font-size:15.5px;line-height:15.5px;font-weight:bold;letter-spacing:-0.250px;color:#808186;">PPC Bid</span>
<span class="t" style="left:116.00px;top:746.40px;font-size:16px;line-height:16px;font-weight:normal;letter-spacing:0.800px;color:#25272b;">laundry bin</span>
<span class="t" style="left:246.00px;top:716.50px;font-size:16px;line-height:16px;font-weight:normal;letter-spacing:0.571px;color:#25272b;">Home &amp; Kitch...</span>
<span class="t" style="left:246.00px;top:744.00px;font-size:16px;line-height:16px;font-weight:normal;letter-spacing:0.000px;color:#25272b;">Baby</span>
<span class="t" style="left:246.00px;top:772.00px;font-size:16px;line-height:16px;font-weight:normal;letter-spacing:0.562px;color:#25272b;">Industrial &amp; S...</span>
<span class="t" style="left:731.00px;top:735.00px;font-size:16px;line-height:16px;font-weight:normal;letter-spacing:-0.600px;color:#25272b;">22,413</span>
<span class="t" style="left:753.00px;top:758.00px;font-size:16px;line-height:16px;font-weight:normal;letter-spacing:-1.000px;color:#9c9ea3;">747</span>
<span class="t" style="left:904.00px;top:735.00px;font-size:16px;line-height:16px;font-weight:normal;letter-spacing:-0.500px;color:#25272b;">376</span>
<span class="t" style="left:894.00px;top:758.00px;font-size:16px;line-height:16px;font-weight:normal;letter-spacing:-0.250px;color:#9c9ea3;">1.68%</span>
<span class="t" style="left:1060.00px;top:746.00px;font-size:16px;line-height:16px;font-weight:normal;letter-spacing:0.000px;color:#25272b;">40.3%</span>
<span class="t" style="left:1199.00px;top:746.00px;font-size:16px;line-height:16px;font-weight:normal;letter-spacing:0.250px;color:#25272b;">3,000</span>
<span class="t" style="left:1306.00px;top:735.00px;font-size:16px;line-height:16px;font-weight:normal;letter-spacing:0.000px;color:#9c9ea3;">$</span>
<span class="t" style="left:1321.40px;top:735.00px;font-size:16px;line-height:16px;font-weight:normal;letter-spacing:0.250px;color:#25272b;">30.04</span>
<span class="t" style="left:1297.00px;top:758.00px;font-size:16px;line-height:16px;font-weight:normal;letter-spacing:0.300px;color:#9c9ea3;">748 (4.5)</span>
<span class="t" style="left:1418.00px;top:735.00px;font-size:16px;line-height:16px;font-weight:normal;letter-spacing:0.000px;color:#9c9ea3;">$</span>
<span class="t" style="left:1434.00px;top:735.00px;font-size:16px;line-height:16px;font-weight:normal;letter-spacing:-0.667px;color:#25272b;">0.61</span>
<span class="t" style="left:1399.00px;top:758.00px;font-size:16px;line-height:16px;font-weight:normal;letter-spacing:0.700px;color:#9c9ea3;">0.49 - 0.98</span>
<span class="t" style="left:116.00px;top:869.10px;font-size:16px;line-height:16px;font-weight:normal;letter-spacing:0.800px;color:#25272b;">laundry bin</span>
<span class="t" style="left:246.00px;top:839.50px;font-size:16px;line-height:16px;font-weight:normal;letter-spacing:0.571px;color:#25272b;">Home &amp; Kitch...</span>
<span class="t" style="left:246.00px;top:867.00px;font-size:16px;line-height:16px;font-weight:normal;letter-spacing:0.000px;color:#25272b;">Baby</span>
<span class="t" style="left:246.00px;top:895.00px;font-size:16px;line-height:16px;font-weight:normal;letter-spacing:0.562px;color:#25272b;">Industrial &amp; S...</span>
<span class="t" style="left:731.00px;top:858.00px;font-size:16px;line-height:16px;font-weight:normal;letter-spacing:-0.600px;color:#25272b;">22,413</span>
<span class="t" style="left:753.00px;top:881.00px;font-size:16px;line-height:16px;font-weight:normal;letter-spacing:-1.000px;color:#9c9ea3;">747</span>
<span class="t" style="left:904.00px;top:858.00px;font-size:16px;line-height:16px;font-weight:normal;letter-spacing:-0.500px;color:#25272b;">376</span>
<span class="t" style="left:894.00px;top:881.00px;font-size:16px;line-height:16px;font-weight:normal;letter-spacing:-0.250px;color:#9c9ea3;">1.68%</span>
<span class="t" style="left:1060.00px;top:869.00px;font-size:16px;line-height:16px;font-weight:normal;letter-spacing:0.000px;color:#25272b;">40.3%</span>
<span class="t" style="left:1199.00px;top:869.00px;font-size:16px;line-height:16px;font-weight:normal;letter-spacing:0.250px;color:#25272b;">3,000</span>
<span class="t" style="left:1306.00px;top:858.00px;font-size:16px;line-height:16px;font-weight:normal;letter-spacing:0.000px;color:#9c9ea3;">$</span>
<span class="t" style="left:1321.40px;top:858.00px;font-size:16px;line-height:16px;font-weight:normal;letter-spacing:0.250px;color:#25272b;">30.04</span>
<span class="t" style="left:1297.00px;top:881.00px;font-size:16px;line-height:16px;font-weight:normal;letter-spacing:0.300px;color:#9c9ea3;">748 (4.5)</span>
<span class="t" style="left:1418.00px;top:858.00px;font-size:16px;line-height:16px;font-weight:normal;letter-spacing:0.000px;color:#9c9ea3;">$</span>
<span class="t" style="left:1434.00px;top:858.00px;font-size:16px;line-height:16px;font-weight:normal;letter-spacing:-0.667px;color:#25272b;">0.61</span>
<span class="t" style="left:1399.00px;top:881.00px;font-size:16px;line-height:16px;font-weight:normal;letter-spacing:0.700px;color:#9c9ea3;">0.49 - 0.98</span>
<span class="t" style="left:78.30px;top:990.00px;font-size:16px;line-height:16px;font-weight:normal;letter-spacing:0.000px;color:#9c9ea3;">2</span>
<span class="t" style="left:116.00px;top:978.50px;font-size:16px;line-height:16px;font-weight:normal;letter-spacing:0.727px;color:#25272b;">laundry bins</span>
<span class="t" style="left:246.00px;top:960.50px;font-size:16px;line-height:16px;font-weight:normal;letter-spacing:0.571px;color:#25272b;">Home &amp; Kitch...</span>
<span class="t" style="left:246.00px;top:988.00px;font-size:16px;line-height:16px;font-weight:normal;letter-spacing:0.000px;color:#25272b;">Baby</span>
<span class="t" style="left:246.00px;top:1016.00px;font-size:16px;line-height:16px;font-weight:normal;letter-spacing:0.562px;color:#25272b;">Industrial &amp; S...</span>
<span class="t" style="left:737.00px;top:979.00px;font-size:16px;line-height:16px;font-weight:normal;letter-spacing:0.000px;color:#25272b;">3,508</span>
<span class="t" style="left:755.00px;top:1002.00px;font-size:16px;line-height:16px;font-weight:normal;letter-spacing:-1.500px;color:#9c9ea3;">117</span>
<span class="t" style="left:911.00px;top:979.00px;font-size:16px;line-height:16px;font-weight:normal;letter-spacing:0.000px;color:#25272b;">55</span>
<span class="t" style="left:895.00px;top:1002.00px;font-size:16px;line-height:16px;font-weight:normal;letter-spacing:-0.500px;color:#9c9ea3;">1.58%</span>
<span class="t" style="left:1060.00px;top:990.00px;font-size:16px;line-height:16px;font-weight:normal;letter-spacing:0.000px;color:#25272b;">39.6%</span>
<span class="t" style="left:1199.00px;top:990.00px;font-size:16px;line-height:16px;font-weight:normal;letter-spacing:0.250px;color:#25272b;">3,000</span>
<span class="t" style="left:1309.30px;top:979.00px;font-size:16px;line-height:16px;font-weight:normal;letter-spacing:0.000px;color:#9c9ea3;">$</span>
<span class="t" style="left:1324.30px;top:979.00px;font-size:16px;line-height:16px;font-weight:normal;letter-spacing:-0.475px;color:#25272b;">27.53</span>
<span class="t" style="left:1298.00px;top:1002.00px;font-size:16px;line-height:16px;font-weight:normal;letter-spacing:0.175px;color:#9c9ea3;">797 (4.5)</span>
<span class="t" style="left:1418.00px;top:979.00px;font-size:16px;line-height:16px;font-weight:normal;letter-spacing:0.000px;color:#9c9ea3;">$</span>
<span class="t" style="left:1434.00px;top:979.00px;font-size:16px;line-height:16px;font-weight:normal;letter-spacing:-0.667px;color:#25272b;">0.61</span>
<span class="t" style="left:1399.00px;top:1002.00px;font-size:16px;line-height:16px;font-weight:normal;letter-spacing:0.700px;color:#9c9ea3;">0.49 - 0.98</span>
<span class="t" style="left:78.30px;top:1111.00px;font-size:16px;line-height:16px;font-weight:normal;letter-spacing:0.000px;color:#9c9ea3;">3</span>
<span class="t" style="left:116.00px;top:1087.40px;font-size:16px;line-height:16px;font-weight:normal;letter-spacing:0.929px;color:#25272b;">lint bin for la</span>
<span class="t" style="left:116.00px;top:1110.60px;font-size:16px;line-height:16px;font-weight:normal;letter-spacing:0.889px;color:#25272b;">undry room</span>
<span class="t" style="left:246.00px;top:1081.50px;font-size:16px;line-height:16px;font-weight:normal;letter-spacing:0.571px;color:#25272b;">Home &amp; Kitch...</span>
<span class="t" style="left:247.00px;top:1109.00px;font-size:16px;line-height:16px;font-weight:normal;letter-spacing:0.357px;color:#25272b;">Tools &amp; Home...</span>
<span class="t" style="left:246.00px;top:1137.00px;font-size:16px;line-height:16px;font-weight:normal;letter-spacing:0.429px;color:#25272b;">Health, Hous...</span>
<span class="t" style="left:737.00px;top:1100.00px;font-size:16px;line-height:16px;font-weight:normal;letter-spacing:0.000px;color:#25272b;">2,654</span>
<span class="t" style="left:759.00px;top:1123.00px;font-size:16px;line-height:16px;font-weight:normal;letter-spacing:0.000px;color:#9c9ea3;">88</span>
<span class="t" style="left:912.00px;top:1100.00px;font-size:16px;line-height:16px;font-weight:normal;letter-spacing:-1.000px;color:#25272b;">22</span>
<span class="t" style="left:892.00px;top:1123.00px;font-size:16px;line-height:16px;font-weight:normal;letter-spacing:0.250px;color:#9c9ea3;">0.86%</span>
<span class="t" style="left:1059.00px;top:1111.00px;font-size:16px;line-height:16px;font-weight:normal;letter-spacing:0.250px;color:#25272b;">53.5%</span>
<span class="t" style="left:1214.00px;top:1111.00px;font-size:16px;line-height:16px;font-weight:normal;letter-spacing:0.000px;color:#25272b;">168</span>
<span class="t" style="left:1311.30px;top:1100.00px;font-size:16px;line-height:16px;font-weight:normal;letter-spacing:0.000px;color:#9c9ea3;">$</span>
<span class="t" style="left:1326.60px;top:1100.00px;font-size:16px;line-height:16px;font-weight:normal;letter-spacing:-1.050px;color:#25272b;">20.15</span>
<span class="t" style="left:1284.30px;top:1123.00px;font-size:16px;line-height:16px;font-weight:normal;letter-spacing:0.110px;color:#9c9ea3;">1,000 (4.3)</span>
<span class="t" style="left:1417.50px;top:1100.00px;font-size:16px;line-height:16px;font-weight:normal;letter-spacing:0.000px;color:#9c9ea3;">$</span>
<span class="t" style="left:1433.00px;top:1100.00px;font-size:16px;line-height:16px;font-weight:normal;letter-spacing:-0.333px;color:#25272b;">0.76</span>
<span class="t" style="left:1401.00px;top:1123.00px;font-size:16px;line-height:16px;font-weight:normal;letter-spacing:0.300px;color:#9c9ea3;">0.50 - 1.24</span>
</body></html>
